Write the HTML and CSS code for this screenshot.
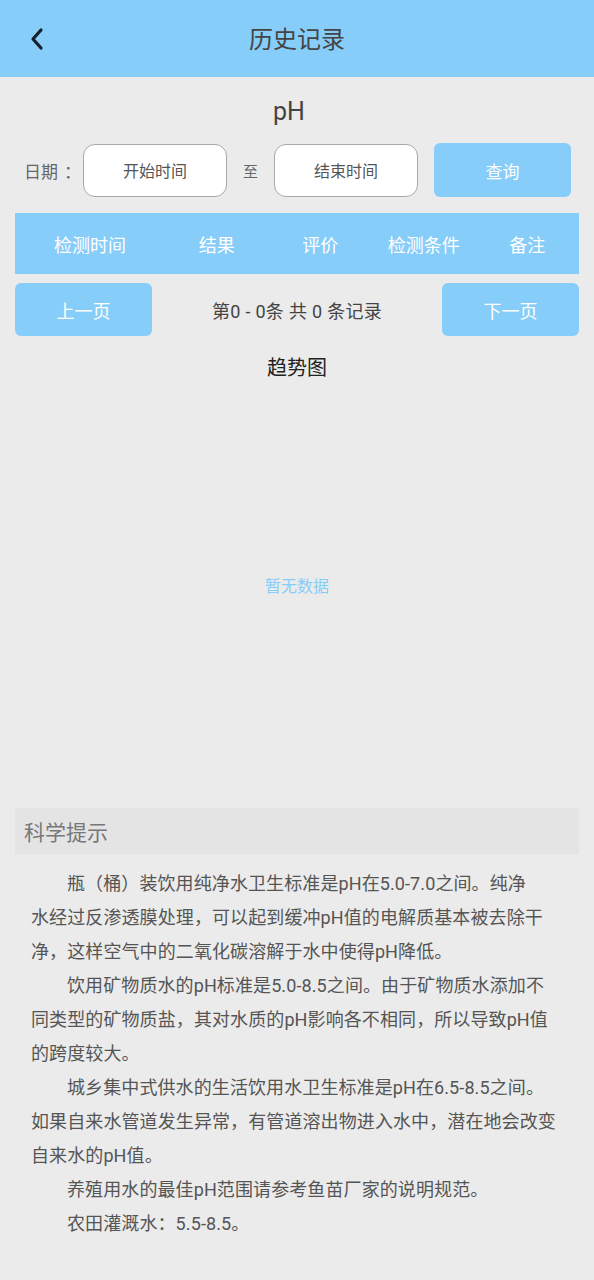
FILE: index.html
```html
<!DOCTYPE html>
<html lang="zh-CN">
<head>
<meta charset="utf-8">
<title>历史记录</title>
<link rel="stylesheet" href="styles.css">
</head>
<body>
<header class="topbar">
  <span class="back">
    <svg width="16" height="24" viewBox="0 0 16 24"><path d="M12 3 L4 12 L12 21" fill="none" stroke="#15202b" stroke-width="3.2" stroke-linecap="round" stroke-linejoin="round"/></svg>
  </span>
  <h1 class="title">历史记录</h1>
</header>
<main class="main">
  <div class="param">pH</div>
  <div class="date-row">
    <span class="date-label">日期<span class="colon">：</span></span>
    <div class="date-input">开始时间</div>
    <span class="to">至</span>
    <div class="date-input">结束时间</div>
    <button class="btn query">查询</button>
  </div>
  <div class="table-head">
    <span>检测时间</span>
    <span>结果</span>
    <span>评价</span>
    <span>检测条件</span>
    <span>备注</span>
  </div>
  <div class="pager">
    <button class="btn page-btn">上一页</button>
    <span class="page-info">第0 - 0条 共 0 条记录</span>
    <button class="btn page-btn">下一页</button>
  </div>
  <div class="chart-title">趋势图</div>
  <div class="chart">暂无数据</div>
  <div class="tip-head">科学提示</div>
  <div class="tips">
    <p>瓶（桶）装饮用纯净水卫生标准是pH在5.0-7.0之间。纯净<br>水经过反渗透膜处理，可以起到缓冲pH值的电解质基本被去除干<br>净，这样空气中的二氧化碳溶解于水中使得pH降低。</p>
    <p>饮用矿物质水的pH标准是5.0-8.5之间。由于矿物质水添加不<br>同类型的矿物质盐，其对水质的pH影响各不相同，所以导致pH值<br>的跨度较大。</p>
    <p>城乡集中式供水的生活饮用水卫生标准是pH在6.5-8.5之间。<br>如果自来水管道发生异常，有管道溶出物进入水中，潜在地会改变<br>自来水的pH值。</p>
    <p>养殖用水的最佳pH范围请参考鱼苗厂家的说明规范。</p>
    <p>农田灌溉水：5.5-8.5。</p>
  </div>
</main>
</body>
</html>
```

FILE: styles.css
```css
* { box-sizing: border-box; }
html, body { margin: 0; padding: 0; }
body {
  background: #ebebeb;
  font-family: Roboto, "Noto Sans CJK SC", sans-serif;
  color: #444;
  width: 594px;
}
.topbar {
  height: 77px;
  background: #87cdf9;
  display: flex;
  align-items: center;
  justify-content: center;
  position: relative;
}
.back {
  position: absolute;
  left: 29px;
  top: 27px;
  width: 16px;
  height: 24px;
  display: flex;
}
.title {
  margin: 0;
  font-size: 24px;
  font-weight: 400;
  color: #444;
  line-height: 30px;
  margin-top: 2px;
}
.main { padding: 0 15px; }
.param {
  text-align: center;
  font-size: 25px;
  line-height: 30px;
  padding-top: 20px;
  padding-right: 16px;
  margin-bottom: 16px;
  color: #444;
}
.date-row {
  display: flex;
  align-items: center;
  height: 54px;
  padding-left: 9px;
}
.date-label {
  font-family: "Noto Sans CJK SC", sans-serif;
  font-size: 17px;
  color: #666;
  width: 59px;
  white-space: nowrap;
}
.colon {
  margin-left: 6px;
}
.date-input {
  width: 144px;
  height: 53px;
  background: #fff;
  border: 1.5px solid #a8a8a8;
  border-radius: 12px;
  display: flex;
  align-items: center;
  justify-content: center;
  font-size: 16px;
  color: #555;
}
.to {
  font-size: 15px;
  color: #666;
  width: 47px;
  text-align: center;
}
.btn {
  border: 0;
  background: #87cdf9;
  color: #fff;
  font-family: inherit;
  font-size: 17px;
  border-radius: 6px;
  padding: 0;
}
.query {
  width: 137px;
  height: 54px;
  margin-left: 16px;
}
.table-head {
  margin-top: 16px;
  height: 61px;
  background: #87cdf9;
  display: grid;
  grid-template-columns: 150px repeat(4, 1fr);
  align-items: center;
  text-align: center;
  color: #fff;
  font-size: 18px;
}
.pager {
  margin-top: 9px;
  height: 53px;
  display: flex;
  align-items: center;
  justify-content: space-between;
}
.page-btn {
  width: 137px;
  height: 53px;
  font-size: 18px;
}
.page-info {
  font-size: 18px;
  letter-spacing: 0.3px;
  color: #444;
}
.chart-title {
  margin-top: 17px;
  text-align: center;
  font-size: 20px;
  line-height: 30px;
  color: #222;
}
.chart {
  height: 404px;
  display: flex;
  align-items: center;
  justify-content: center;
  color: #87cdf9;
  font-size: 16px;
}
.tip-head {
  margin-top: 21px;
  height: 46px;
  background: #e4e4e4;
  padding-left: 9px;
  display: flex;
  align-items: center;
  font-size: 21px;
  color: #777;
}
.tips {
  margin-top: 13px;
  padding: 0 0 0 16px;
}
.tips p {
  margin: 0;
  font-size: 18px;
  letter-spacing: 0.1px;
  line-height: 34px;
  color: #555;
  text-indent: 2em;
  white-space: nowrap;
}
```
